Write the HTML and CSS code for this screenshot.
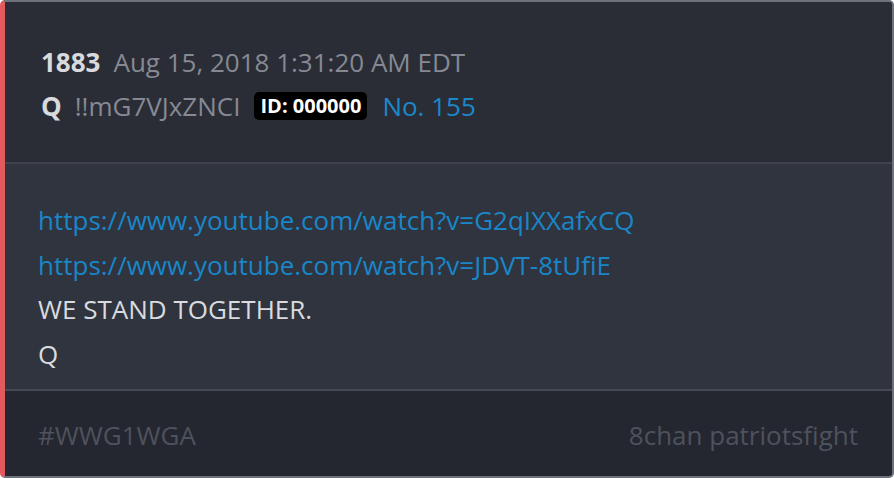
FILE: index.html
```html
<!DOCTYPE html>
<html>
<head>
<meta charset="utf-8">
<link rel="stylesheet" href="styles.css">
</head>
<body>
<div class="card">
  <div class="head">
    <div class="row"><span class="num">1883</span><span class="date">Aug 15, 2018 1:31:20 AM EDT</span></div>
    <div class="row"><span class="name">Q</span><span class="trip">!!mG7VJxZNCI</span><span class="badge">ID: 000000</span><span class="no">No. 155</span></div>
  </div>
  <div class="body">
    <div class="line link">https://www.youtube.com/watch?v=G2qIXXafxCQ</div>
    <div class="line link">https://www.youtube.com/watch?v=JDVT-8tUfiE</div>
    <div class="line">WE STAND TOGETHER.</div>
    <div class="line">Q</div>
  </div>
  <div class="foot">
    <span>#WWG1WGA</span>
    <span>8chan patriotsfight</span>
  </div>
</div>
</body>
</html>
```
FILE: styles.css
```css
html, body { margin: 0; padding: 0; background: #ffffff; }
body { font-family: "Open Sans", "Noto Sans", sans-serif; }
.card {
  width: 894px;
  height: 478px;
  box-sizing: border-box;
  border: 2px solid #6f727b;
  border-left: 5px solid #e25a5e;
  border-radius: 5px;
  overflow: hidden;
  display: flex;
  flex-direction: column;
  background: #242730;
}
.head {
  background: #2a2d36;
  height: 162px;
  box-sizing: border-box;
  padding: 38px 0 0 36px;
  border-bottom: 2px solid #3e424c;
}
.row { display: flex; align-items: center; height: 44px; font-size: 26px; }
.num { font-weight: 700; color: #d9dadd; margin-right: 13px; }
.date { color: #868993; }
.name { font-weight: 700; color: #d9dadd; margin-right: 13px; }
.trip { color: #868993; margin-right: 14px; }
.badge {
  background: #000;
  color: #fff;
  font-weight: 700;
  font-size: 20px;
  line-height: 28px;
  padding: 0 6px;
  border-radius: 5px;
  margin-right: 15px;
}
.no { color: #1a88cb; }
.body {
  background: #2f343e;
  height: 227px;
  box-sizing: border-box;
  padding: 34px 0 0 33px;
  border-bottom: 2px solid #454952;
}
.line { font-size: 26px; line-height: 44.5px; color: #dadbde; }
.link { color: #1a86c8; }
.foot {
  flex: 1;
  display: flex;
  justify-content: space-between;
  align-items: center;
  padding: 3px 34px 0 33px;
  font-size: 26px;
  color: #4e525c;
}
```
